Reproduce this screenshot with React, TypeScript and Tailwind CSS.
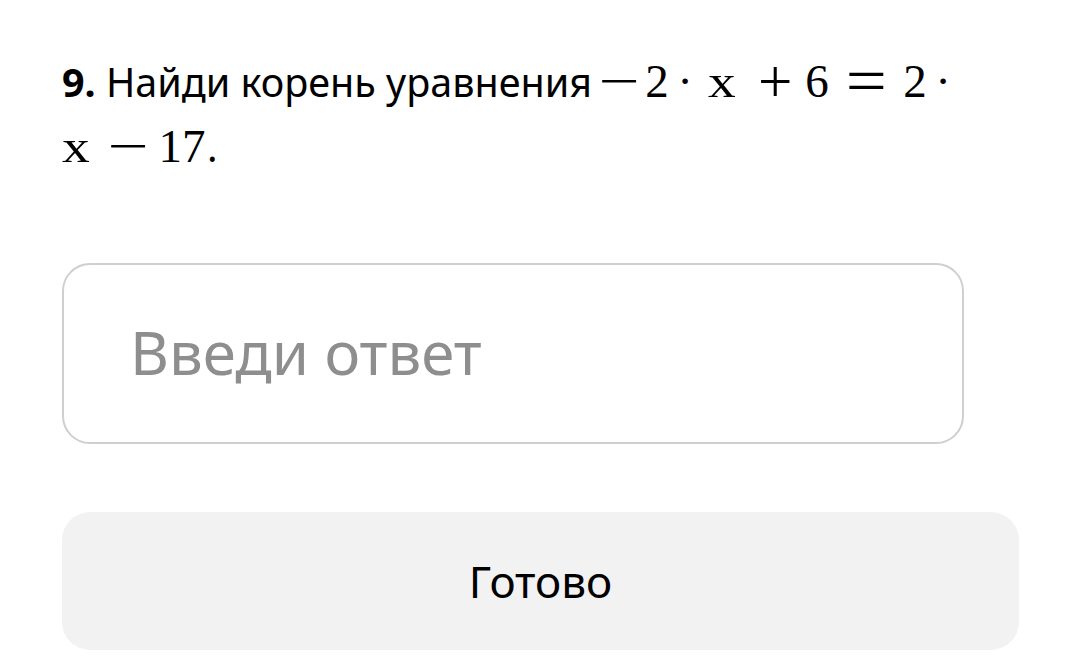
import { useState } from 'react';

const sans = { fontFamily: '"Noto Sans", "Open Sans", sans-serif' };
const serif = { fontFamily: '"Liberation Serif", "DejaVu Serif", serif' };

// one glyph of the formula in a fixed-width cell, centred
function Tok({ ch, w, className = '' }: { ch: string; w: number; className?: string }) {
  return (
    <span className="inline-flex justify-center leading-none" style={{ ...serif, width: w }}>
      <span className={`inline-block ${className}`}>{ch}</span>
    </span>
  );
}

export default function App() {
  const [answer, setAnswer] = useState('');

  return (
    <div className="min-h-screen bg-white px-[62px] pt-[48px]" style={sans}>
      <p className="text-[39.5px] leading-[62px] text-black">
        <span className="font-bold">9.</span> Найди корень уравнения
        <span className="text-[47px]">
          <Tok ch="−" w={54} className="scale-x-[1.55]" />
          <Tok ch="2" w={22} />
          <Tok ch="·" w={34} />
          <Tok ch="x" w={40} className="scale-x-[1.18]" />
          <Tok ch="+" w={66} className="scale-[1.3]" />
          <Tok ch="6" w={18} />
          <Tok ch="=" w={80} className="scale-x-[1.55] scale-y-[1.4]" />
          <Tok ch="2" w={18} />
          <Tok ch="·" w={38} />
        </span>
        <br />
        <span className="text-[47px]">
          <Tok ch="x" w={28} className="scale-x-[1.18]" />
          <Tok ch="−" w={76} className="scale-x-[1.55]" />
          <Tok ch="17" w={32} />
        </span>
        <span className="ml-[9px]">.</span>
      </p>

      <input
        value={answer}
        onChange={(e) => setAnswer(e.target.value)}
        placeholder="Введи ответ"
        className="mt-[85px] block h-[181px] w-[902px] rounded-[28px] border-2 border-[#cfcfcf] pl-[66px] pr-[60px] pb-[4px] text-[60px] text-black outline-none placeholder:text-[#8e8e8e]"
        style={sans}
      />

      <button className="mt-[68px] flex h-[138px] w-[957px] items-center justify-center rounded-[28px] bg-[#f2f2f2] text-[44px] text-black">
        Готово
      </button>
    </div>
  );
}
